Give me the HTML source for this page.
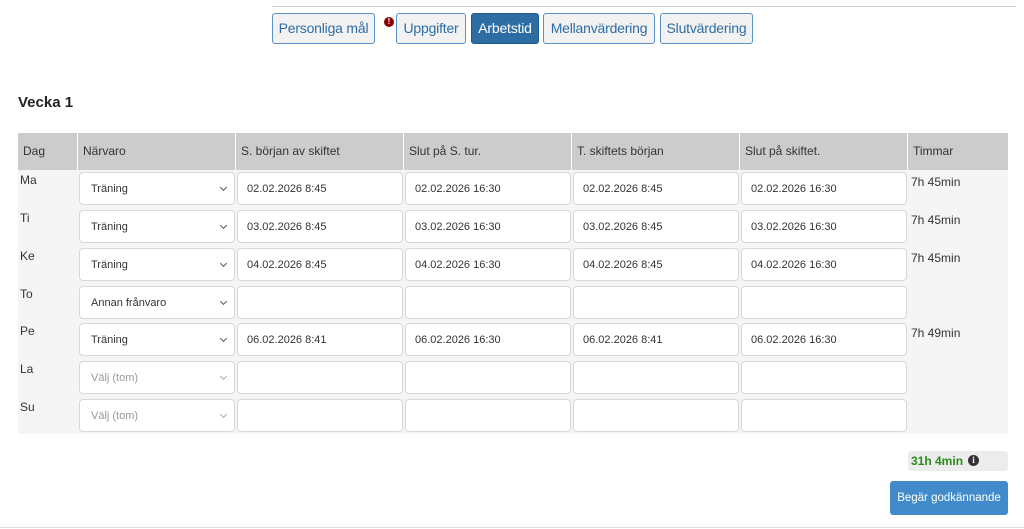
<!DOCTYPE html><html><head><style>
body{margin:0;width:1024px;height:529px;background:#fff;font-family:"Liberation Sans",sans-serif;position:relative;overflow:hidden;color:#333}
.a{position:absolute}
.tab{position:absolute;top:13px;height:31px;border:1px solid #5b93c4;border-radius:3px;background:#f2f2f2;color:#2e6da4;font-size:14px;line-height:29px;text-align:center;box-sizing:border-box;white-space:nowrap;letter-spacing:-0.2px}
.in{position:absolute;height:31px;border:1px solid #d8d8d8;border-radius:4px;background:#fff;font-size:11px;line-height:32px;padding-left:9px;box-sizing:content-box;color:#333}
.sel{padding-left:11px}
.sel::after{content:"";position:absolute;right:8px;top:12px;width:4px;height:4px;border-right:1.3px solid #555;border-bottom:1.3px solid #555;transform:rotate(45deg)}
.g{color:#999}.g::after{border-color:#aaa}
.h{position:absolute;top:133px;height:37px;line-height:37px;font-size:12px;color:#333;padding-left:5px;background:#ccc;border-right:1px solid #fff;box-sizing:border-box}
.d{position:absolute;left:20px;font-size:12px}
.t{position:absolute;left:911px;font-size:12px}
</style></head><body>
<div class="a" style="left:272px;top:6px;width:744px;height:1px;background:#ccc"></div>
<div class="tab" style="left:272px;width:103px">Personliga mål</div>
<div class="a" style="left:384px;top:17px;width:10px;height:10px;border-radius:50%;background:#8b0000;color:#fff;font-size:8px;line-height:10px;text-align:center;font-weight:bold">!</div>
<div class="tab" style="left:396px;width:70px">Uppgifter</div>
<div class="tab" style="left:471px;width:68px;background:#2e6da4;color:#fff;border-color:#245a8a">Arbetstid</div>
<div class="tab" style="left:543px;width:112px">Mellanvärdering</div>
<div class="tab" style="left:660px;width:93px">Slutvärdering</div>
<div class="a" style="left:18px;top:94px;font-size:15px;font-weight:bold;color:#222">Vecka 1</div>
<div class="a" style="left:18px;top:170px;width:990px;height:264px;background:#f5f5f5"></div>
<div class="h" style="left:18px;width:60px">Dag</div>
<div class="h" style="left:78px;width:158px">Närvaro</div>
<div class="h" style="left:236px;width:168px">S. början av skiftet</div>
<div class="h" style="left:404px;width:168px">Slut på S. tur.</div>
<div class="h" style="left:572px;width:168px">T. skiftets början</div>
<div class="h" style="left:740px;width:168px">Slut på skiftet.</div>
<div class="h" style="left:908px;width:100px;border:0">Timmar</div>
<div id="rows"></div>
<script>
var R=[["Ma","Träning","02.02.2026 8:45","02.02.2026 16:30","02.02.2026 8:45","02.02.2026 16:30","7h 45min"],
["Ti","Träning","03.02.2026 8:45","03.02.2026 16:30","03.02.2026 8:45","03.02.2026 16:30","7h 45min"],
["Ke","Träning","04.02.2026 8:45","04.02.2026 16:30","04.02.2026 8:45","04.02.2026 16:30","7h 45min"],
["To","Annan frånvaro","","","","",""],
["Pe","Träning","06.02.2026 8:41","06.02.2026 16:30","06.02.2026 8:41","06.02.2026 16:30","7h 49min"],
["La","Välj (tom)","","","","",""],["Su","Välj (tom)","","","","",""]];
var tops=[172,210,248,286,323,361,399],xs=[237,405,573,741],h="";
R.forEach(function(r,i){var y=tops[i];
h+='<div class="d" style="top:'+(y+1)+'px">'+r[0]+'</div>';
h+='<div class="in sel'+(r[1]=="Välj (tom)"?" g":"")+'" style="left:79px;top:'+y+'px;width:143px">'+r[1]+'</div>';
for(var j=0;j<4;j++)h+='<div class="in" style="left:'+xs[j]+'px;top:'+y+'px;width:155px">'+r[2+j]+'</div>';
h+='<div class="t" style="top:'+(y+3)+'px">'+r[6]+'</div>';});
document.getElementById("rows").innerHTML=h;
</script>
<div class="a" style="left:908px;top:451px;width:100px;height:20px;background:#ececec;border-radius:3px"></div>
<div class="a" style="left:911px;top:454px;font-size:12px;font-weight:bold;color:#2a8a1a">31h 4min</div>
<div class="a" style="left:968px;top:455px;width:11px;height:11px;border-radius:50%;background:#333;color:#fff;font-size:9px;line-height:11px;text-align:center;font-weight:bold;font-family:'Liberation Serif',serif">i</div>
<div class="a" style="left:890px;top:481px;width:118px;height:34px;background:#428bca;border-radius:3px;color:#fff;font-size:11.5px;line-height:34px;text-align:center">Begär godkännande</div>
<div class="a" style="left:0;top:527px;width:1024px;height:1px;background:#ddd"></div>
</body></html>
